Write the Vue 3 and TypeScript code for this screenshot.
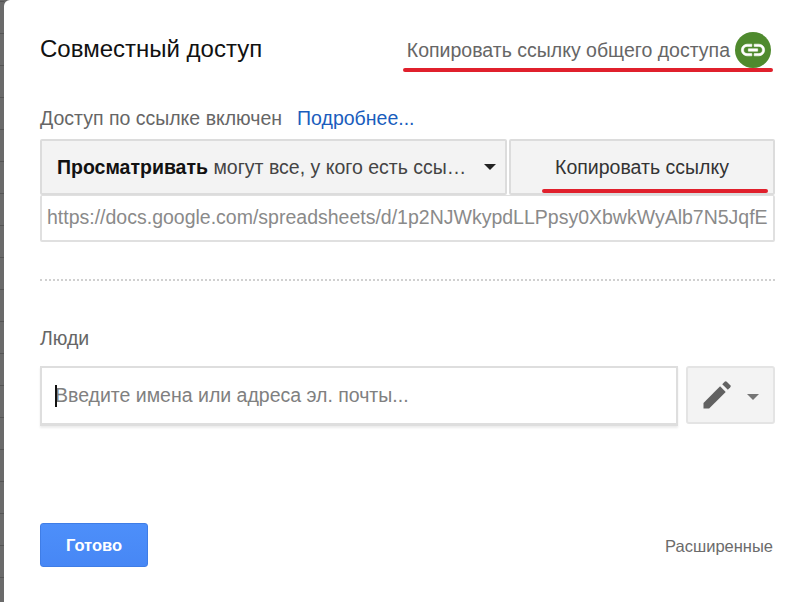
<template>
  <div class="page">
    <div class="backdrop"></div>
    <div class="dialog">
      <header class="head">
        <h1 class="title">Совместный доступ</h1>
        <div class="copy-shared">
          <span class="copy-shared-label">Копировать ссылку общего доступа</span>
          <span class="link-icon">
            <svg width="28" height="28" viewBox="0 0 24 24" fill="#fff" stroke="#fff" stroke-width="0.5">
              <path d="M3.9 12c0-1.71 1.39-3.1 3.1-3.1h4V7H7c-2.76 0-5 2.24-5 5s2.24 5 5 5h4v-1.9H7c-1.71 0-3.1-1.39-3.1-3.1zM8 13h8v-2H8v2zm9-6h-4v1.9h4c1.71 0 3.1 1.39 3.1 3.1s-1.39 3.1-3.1 3.1h-4V17h4c2.76 0 5-2.24 5-5s-2.24-5-5-5z" />
            </svg>
          </span>
          <i class="marker marker-shared"></i>
        </div>
      </header>

      <div class="status">
        <span>Доступ по ссылке включен</span>
        <a class="more" href="#">Подробнее...</a>
      </div>

      <div class="link-row">
        <button class="btn access" type="button">
          <span class="access-text"><b>Просматривать</b> могут все, у кого есть ссы…</span>
          <i class="caret caret-dark"></i>
        </button>
        <button class="btn copy" type="button">
          Копировать ссылку
          <i class="marker marker-copy"></i>
        </button>
      </div>
      <div class="url">{{ url }}</div>

      <div class="divider"></div>

      <div class="people-label">Люди</div>
      <div class="people-row">
        <div class="people-input">
          <i class="text-cursor"></i>
          <span>Введите имена или адреса эл. почты...</span>
        </div>
        <button class="btn role" type="button">
          <svg width="36" height="36" viewBox="0 0 24 24" fill="#616161">
            <path d="M3 21v-3.75L14.06 6.19l3.75 3.75L6.75 21H3z" />
            <path d="M15.5 4.75l1.6-1.6a1 1 0 0 1 1.41 0l2.34 2.34a1 1 0 0 1 0 1.41l-1.6 1.6z" />
          </svg>
          <i class="caret caret-grey"></i>
        </button>
      </div>

      <footer class="foot">
        <button class="done" type="button">Готово</button>
        <span class="advanced">Расширенные</span>
      </footer>
    </div>
  </div>
</template>

<script setup lang="ts">
const url = "https://docs.google.com/spreadsheets/d/1p2NJWkypdLLPpsy0XbwkWyAlb7N5JqfE";
</script>

<style>
html,
body {
  margin: 0;
  background: #fff;
}
</style>

<style scoped>
.page {
  position: relative;
  display: flex;
  width: 797px;
  height: 602px;
  overflow: hidden;
  background: #666;
  font-family: "Liberation Sans", Arial, sans-serif;
}
.backdrop {
  position: absolute;
  left: 0;
  top: 0;
  width: 4px;
  height: 602px;
  background: repeating-linear-gradient(#6a6a6a 0 31px, #555 31px 32px);
  background-size: 4px 32px;
  background-position: 0 2px;
}
.dialog {
  position: relative;
  flex: 1;
  margin-left: 4px;
  padding: 0 22px 0 36px;
  background: #fff;
  border-top-left-radius: 6px;
  display: flex;
  flex-direction: column;
}
.head {
  display: flex;
  align-items: center;
  justify-content: space-between;
  height: 80px;
  padding-top: 20px;
  box-sizing: border-box;
}
.title {
  margin: 0 0 2px;
  font-size: 24px;
  font-weight: 400;
  color: #111;
}
.copy-shared {
  position: relative;
  display: flex;
  align-items: center;
  gap: 5px;
  margin-right: 4px;
  font-size: 19.5px;
  color: #666;
}
.link-icon {
  display: flex;
  align-items: center;
  justify-content: center;
  width: 36px;
  height: 36px;
  border-radius: 50%;
  background: #4f8a2e;
}
.marker {
  position: absolute;
  display: block;
  height: 4px;
  border-radius: 2px;
  background: #e0202c;
}
.marker-shared {
  left: -4px;
  right: -2px;
  bottom: -4px;
}
.marker-copy {
  left: 31px;
  right: 5px;
  bottom: 0;
}
.status {
  display: flex;
  gap: 15px;
  margin-top: 28px;
  font-size: 19.5px;
  line-height: 20px;
  color: #666;
}
.more {
  color: #1a5dbd;
  text-decoration: none;
}
.link-row {
  display: flex;
  gap: 2px;
  margin-top: 11px;
  height: 56px;
}
.btn {
  position: relative;
  box-sizing: border-box;
  background: #f3f3f3;
  border: 2px solid #dcdcdc;
  border-radius: 2px;
  font-family: inherit;
  padding: 0;
}
.access {
  display: flex;
  align-items: center;
  width: 467px;
  padding-left: 15px;
  font-size: 19.5px;
  color: #444;
}
.access-text {
  white-space: nowrap;
}
.access-text b {
  color: #111;
}
.caret {
  display: block;
  width: 0;
  height: 0;
  border-left: 6px solid transparent;
  border-right: 6px solid transparent;
  border-top: 6px solid #222;
}
.caret-dark {
  margin-left: 18px;
}
.copy {
  flex: 1;
  font-size: 19.5px;
  color: #333;
}
.url {
  box-sizing: border-box;
  height: 47px;
  padding-left: 5px;
  border: 2px solid #e0e0e0;
  border-top-width: 1px;
  border-radius: 2px;
  overflow: hidden;
  white-space: nowrap;
  font-size: 19.5px;
  line-height: 43px;
  color: #8a8a8a;
}
.divider {
  margin-top: 37px;
  border-top: 2px dotted #d0d0d0;
}
.people-label {
  margin-top: 47px;
  font-size: 19.5px;
  line-height: 20px;
  color: #666;
}
.people-row {
  display: flex;
  gap: 8px;
  margin-top: 18px;
}
.people-input {
  position: relative;
  box-sizing: border-box;
  display: flex;
  align-items: center;
  width: 638px;
  height: 60px;
  padding-left: 13px;
  border: 2px solid #dedede;
  border-bottom-width: 3px;
  box-shadow: 0 2px 2px rgba(0, 0, 0, 0.08);
  font-size: 19.5px;
  color: #808080;
}
.text-cursor {
  position: absolute;
  left: 13px;
  top: 17px;
  width: 2px;
  height: 22px;
  background: #111;
}
.role {
  display: flex;
  align-items: center;
  flex: 1;
  height: 58px;
  padding-left: 11px;
  border-radius: 3px;
  border-color: #e4e4e4;
}
.caret-grey {
  margin-left: 12px;
  margin-top: 4px;
  border-top-color: #757575;
}
.foot {
  display: flex;
  align-items: flex-end;
  justify-content: space-between;
  margin-top: 97px;
}
.done {
  width: 108px;
  height: 44px;
  padding: 0;
  border: 1px solid #3f7de6;
  border-radius: 3px;
  background: linear-gradient(#4d8ffa, #4787f5);
  color: #fff;
  font-family: inherit;
  font-size: 16.5px;
  font-weight: 700;
}
.advanced {
  margin: 0 2px 12px 0;
  font-size: 16.5px;
  line-height: 17px;
  color: #6b6b6b;
}
</style>
